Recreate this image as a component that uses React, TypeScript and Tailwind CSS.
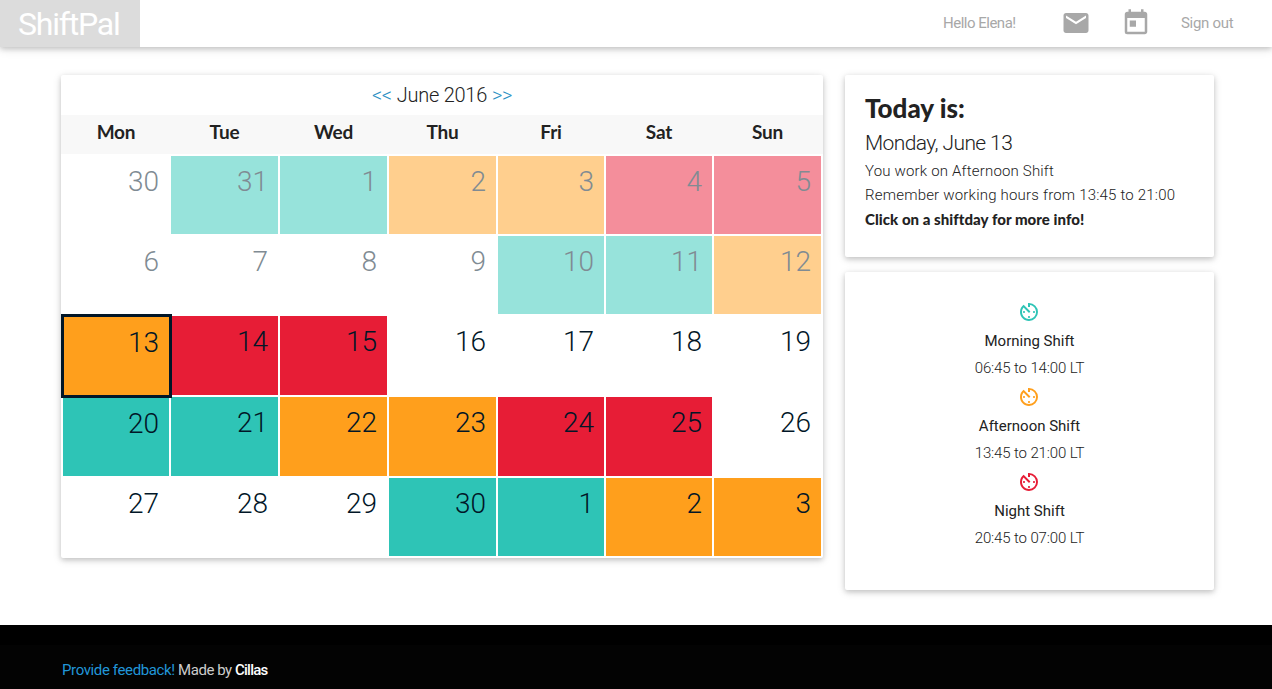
import { MdAvTimer, MdEmail, MdToday } from "react-icons/md";

type Shift = "morning" | "afternoon" | "night" | "off";
type Day = [number, Shift];

const shiftBackground: Record<Shift, string> = {
  morning: "bg-[#2ec4b6]",
  afternoon: "bg-[#ff9f1c]",
  night: "bg-[#e71d36]",
  off: "",
};

const fadedBackground: Record<Shift, string> = {
  morning: "bg-[#97e3db]",
  afternoon: "bg-[#ffcf8e]",
  night: "bg-[#f48e9b]",
  off: "",
};

const weekdays = ["Mon", "Tue", "Wed", "Thu", "Fri", "Sat", "Sun"];

const weeks: Day[][] = [
  [[30, "off"], [31, "morning"], [1, "morning"], [2, "afternoon"], [3, "afternoon"], [4, "night"], [5, "night"]],
  [[6, "off"], [7, "off"], [8, "off"], [9, "off"], [10, "morning"], [11, "morning"], [12, "afternoon"]],
  [[13, "afternoon"], [14, "night"], [15, "night"], [16, "off"], [17, "off"], [18, "off"], [19, "off"]],
  [[20, "morning"], [21, "morning"], [22, "afternoon"], [23, "afternoon"], [24, "night"], [25, "night"], [26, "off"]],
  [[27, "off"], [28, "off"], [29, "off"], [30, "morning"], [1, "morning"], [2, "afternoon"], [3, "afternoon"]],
];

const shifts = [
  { name: "Morning Shift", hours: "06:45 to 14:00 LT", color: "text-[#2ec4b6]" },
  { name: "Afternoon Shift", hours: "13:45 to 21:00 LT", color: "text-[#ff9f1c]" },
  { name: "Night Shift", hours: "20:45 to 07:00 LT", color: "text-[#e71d36]" },
];

const card = "bg-white rounded-[2px] shadow-[0_2px_5px_0_rgba(0,0,0,0.16),0_2px_10px_0_rgba(0,0,0,0.12)]";

function Header() {
  return (
    <header className="flex h-[47px] shrink-0 items-center bg-white text-[15px] text-[#a8a8a8] shadow-[0_2px_5px_0_rgba(0,0,0,0.16),0_2px_10px_0_rgba(0,0,0,0.12)]">
      <a className="flex h-full w-[140px] items-center bg-[#dcdcdc] pl-[18px] text-[32px] tracking-[-1.2px] text-white">ShiftPal</a>
      <span className="ml-auto w-[119px] tracking-[-0.5px]">Hello Elena!</span>
      <MdEmail className="-mt-[2px] -ml-[1px] size-[30px]" />
      <MdToday className="-mt-[2px] ml-[30px] size-[30px]" />
      <span className="ml-[30px] mr-[38px] w-[53px] whitespace-nowrap tracking-[-0.3px]">Sign out</span>
    </header>
  );
}

function DayCell({ day, past, today, lowered }: { day: Day; past: boolean; today: boolean; lowered: boolean }) {
  const [number, shift] = day;
  const background = past ? fadedBackground[shift] : shiftBackground[shift];
  return (
    <div className={today ? "z-10 p-px" : "p-px"}>
      <div
        className={`text-right text-[28px] leading-[34px] font-light ${lowered ? "pt-[10px]" : "pt-[9px]"} ${background} ${past ? "text-[#808b93]" : "text-[#011627]"} ${today ? "-mr-px h-[calc(100%+1px)] pr-[11px] outline-3 outline-offset-[-1px] outline-[#011627]" : "h-full pr-[10px]"}`}
      >
        {number}
      </div>
    </div>
  );
}

function Calendar() {
  return (
    <section className={`h-[483px] w-[762px] ${card}`}>
      <div className="flex h-10 items-center justify-center gap-[5px] text-[20px] font-light tracking-[-0.25px] text-[#222]">
        <a className="tracking-[-0.4px] text-[#2b8fc4]">&lt;&lt;</a>
        <span>June 2016</span>
        <a className="tracking-[-0.4px] text-[#2b8fc4]">&gt;&gt;</a>
      </div>
      <div className="grid h-10 grid-cols-[108px_109px_109px_109px_108px_108px_109px] border-b border-white bg-[#f8f8f8] pt-[2px] pl-px text-center font-[Lato] text-[19px] leading-[30px] font-bold tracking-[-0.2px] text-[#222]">
        {weekdays.map((name) => (
          <span key={name}>{name}</span>
        ))}
      </div>
      <div className="grid grid-cols-[108px_109px_109px_109px_108px_108px_109px] grid-rows-[80px_80px_81px_81px_80px] pl-px">
        {weeks.flatMap((week, row) =>
          week.map((day, column) => (
            <DayCell
              key={`${row}-${column}`}
              day={day}
              past={row < 2}
              today={row === 2 && column === 0}
              lowered={column === 0 && (row === 2 || row === 3)}
            />
          )),
        )}
      </div>
    </section>
  );
}

function TodayCard() {
  return (
    <section className={`flex h-[182px] flex-col px-5 pt-4 text-[15px] font-light whitespace-nowrap text-[#222] ${card}`}>
      <h1 className="font-[Lato] text-[26px] leading-[34px] font-black">Today is:</h1>
      <h2 className="pt-[2px] text-[21px] leading-8 tracking-[-0.6px]">Monday, June 13</h2>
      <p className="leading-6 tracking-[0.18px]">You work on Afternoon Shift</p>
      <p className="leading-6 tracking-[0.2px]">Remember working hours from 13:45 to 21:00</p>
      <p className="font-[Lato] leading-6 font-black tracking-[0.05px]">Click on a shiftday for more info!</p>
    </section>
  );
}

function ShiftLegend() {
  return (
    <section className={`flex h-[318px] flex-col items-center pt-[30px] text-[15px] text-[#222] ${card}`}>
      {shifts.map(({ name, hours, color }) => (
        <div key={name} className="flex h-[85px] flex-col items-center">
          <MdAvTimer className={`-my-[2px] mr-px size-6 ${color}`} />
          <h3 className="mt-[5px] leading-7">{name}</h3>
          <p className="leading-[26px] font-light tracking-[-0.13px]">{hours}</p>
        </div>
      ))}
    </section>
  );
}

function Footer() {
  return (
    <footer className="mt-auto h-16 shrink-0 border-t-20 border-black bg-[#030303] pl-[62px] text-[15px] leading-[50px] tracking-[-0.45px] text-[#ccc]">
      <a className="tracking-[-0.38px] text-[#2196d8]">Provide feedback!</a> Made by{" "}
      <a className="font-medium tracking-[-0.75px] text-white">Cillas</a>
    </footer>
  );
}

export default function App() {
  return (
    <div className="flex h-[689px] w-[1272px] flex-col overflow-hidden bg-white font-[Roboto,sans-serif]">
      <Header />
      <main className="flex items-start gap-[22px] pt-7 pl-[61px]">
        <Calendar />
        <div className="flex w-[369px] flex-col gap-[15px]">
          <TodayCard />
          <ShiftLegend />
        </div>
      </main>
      <Footer />
    </div>
  );
}
